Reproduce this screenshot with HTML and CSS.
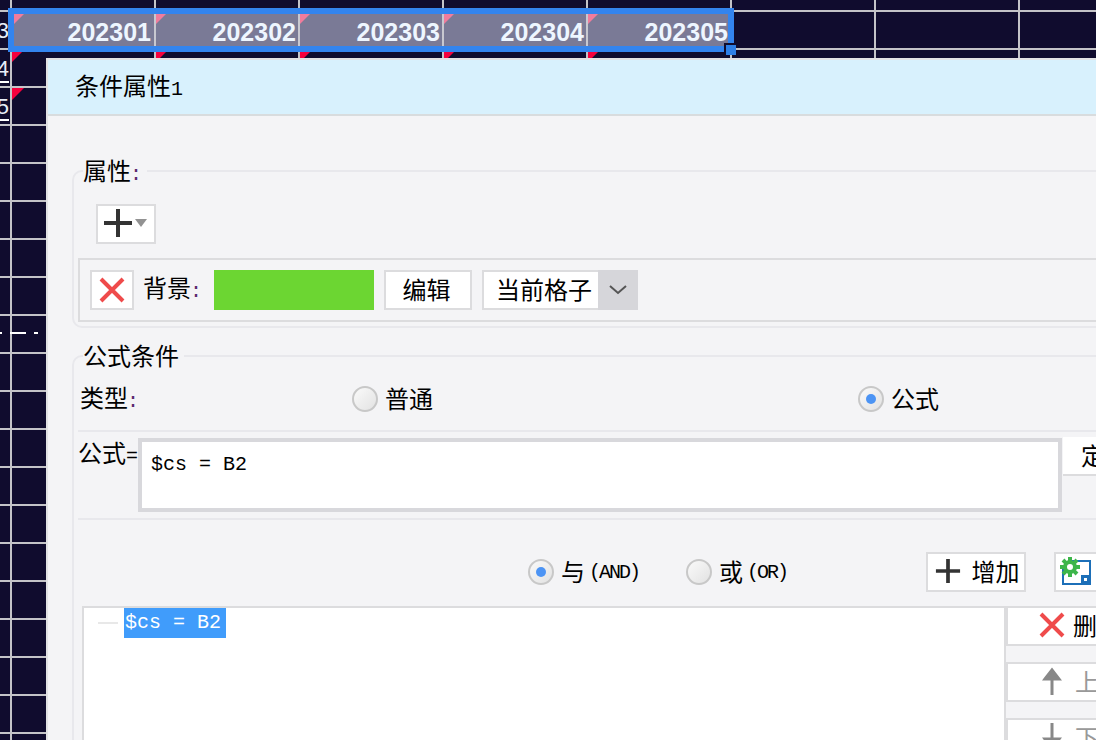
FILE: index.html
```html
<!DOCTYPE html>
<html lang="zh">
<head>
<meta charset="utf-8">
<title>条件属性</title>
<link rel="stylesheet" href="styles.css">
</head>
<body>
<div class="screen">
  <div class="sheet">
    <span class="rownum rownum-3">3</span>
    <span class="rownum rownum-4">4</span>
    <span class="rownum rownum-5">5</span>
    <i class="tri red t1"></i><i class="tri red t2"></i>
    <i class="tri red t3"></i><i class="tri red t4"></i><i class="tri red t5"></i><i class="tri red t6"></i>
    <i class="dash d1"></i><i class="dash d2"></i><i class="dash d3"></i>
    <div class="selection">
      <div class="cell"><i class="tri pink"></i>202301</div>
      <div class="cell"><i class="tri pink"></i>202302</div>
      <div class="cell"><i class="tri pink"></i>202303</div>
      <div class="cell"><i class="tri pink"></i>202304</div>
      <div class="cell"><i class="tri pink"></i>202305</div>
    </div>
    <i class="gap"></i><i class="handle"></i>
  </div>

  <section class="dialog">
    <header class="title">条件属性<span class="mono">1</span></header>
    <div class="body">
      <fieldset class="group">
        <legend>属性<span class="colon">:</span></legend>
        <button class="btn add-menu">
          <svg class="icon-plus" viewBox="0 0 28 28"><path d="M14 0v28M0 14h28" stroke="#333" stroke-width="4"/></svg>
          <svg class="icon-caret" viewBox="0 0 12 8"><path d="M0 0h12L6 8z" fill="#929292"/></svg>
        </button>
        <div class="prop-row">
          <button class="btn del-btn">
            <svg class="icon-x" viewBox="0 0 26 26"><path d="M2 2l22 22M24 2L2 24" stroke="#ef4b4b" stroke-width="4"/></svg>
          </button>
          <span class="prop-label">背景<span class="colon">:</span></span>
          <span class="swatch"></span>
          <button class="btn edit-btn">编辑</button>
          <div class="combo">
            <span class="combo-value">当前格子</span>
            <span class="combo-arrow">
              <svg class="icon-chev" viewBox="0 0 18 10"><path d="M1 1l8 7 8-7" fill="none" stroke="#555" stroke-width="2"/></svg>
            </span>
          </div>
        </div>
      </fieldset>

      <fieldset class="group group-2">
        <legend>公式条件</legend>
        <div class="type-row">
          <span class="type-label">类型<span class="colon">:</span></span>
          <label class="radio-item"><i class="radio"></i>普通</label>
          <label class="radio-item"><i class="radio on"></i>公式</label>
        </div>
        <hr class="rule rule-1">
        <div class="formula-row">
          <span class="formula-label">公式<span class="mono">=</span></span>
          <div class="formula-box mono">$cs = B2</div>
          <button class="btn define-btn">定义</button>
        </div>
        <hr class="rule rule-2">
        <div class="logic-row">
          <label class="radio-item"><i class="radio on"></i>与<span class="mono small">(AND)</span></label>
          <label class="radio-item"><i class="radio"></i>或<span class="mono small">(OR)</span></label>
          <button class="btn add-btn">
            <svg class="icon-plus small-plus" viewBox="0 0 28 28"><path d="M14 1v26M1 14h26" stroke="#333" stroke-width="4"/></svg>
            增加
          </button>
          <button class="btn gear-btn">
            <svg class="icon-gear" viewBox="0 0 32 30">
              <path d="M10 4H30V27H3V12" fill="none" stroke="#1c6fb8" stroke-width="2"/>
              <rect x="21" y="18" width="9" height="9" fill="#1c6fb8"/>
              <rect x="24" y="21" width="3" height="3" fill="#fff"/>
              <circle cx="10" cy="10" r="5" fill="none" stroke="#3cb54a" stroke-width="4"/>
              <path d="M10 0v20M0 10h20M3 3l14 14M17 3L3 17" stroke="#3cb54a" stroke-width="4" stroke-dasharray="4 12"/>
            </svg>
          </button>
        </div>
        <div class="tree-row">
          <div class="tree">
            <span class="tree-branch"></span>
            <span class="tree-node mono">$cs = B2</span>
          </div>
          <div class="side">
            <button class="btn side-btn">
              <svg class="icon-x" viewBox="0 0 26 26"><path d="M2 2l22 22M24 2L2 24" stroke="#ef4b4b" stroke-width="4"/></svg>
              删除
            </button>
            <button class="btn side-btn off">
              <svg class="icon-arrow" viewBox="0 0 20 28"><path d="M10 28V4M3 12l7-9 7 9z" fill="#888" stroke="#888" stroke-width="3"/></svg>
              上移
            </button>
            <button class="btn side-btn off">
              <svg class="icon-arrow" viewBox="0 0 20 28"><path d="M10 0v24M3 16l7 9 7-9z" fill="#888" stroke="#888" stroke-width="3"/></svg>
              下移
            </button>
          </div>
        </div>
      </fieldset>
    </div>
  </section>
</div>
</body>
</html>
```
FILE: styles.css
```css
* { box-sizing: border-box; }
html, body { margin: 0; padding: 0; }
body { font-family: "Noto Sans CJK SC", "Liberation Sans", sans-serif; color: #000; }

.screen {
  position: relative;
  width: 1096px;
  height: 740px;
  overflow: hidden;
}

/* spreadsheet behind the dialog */
.sheet {
  position: absolute;
  inset: 0;
  background-color: #100c2e;
  background-image:
    repeating-linear-gradient(to right, #c4c4c8 0 2px, transparent 2px 144px),
    repeating-linear-gradient(to bottom, #c4c4c8 0 2px, transparent 2px 38px);
  background-position: 10px 0, 0 10px;
}
.rownum {
  position: absolute;
  left: -5px;
  width: 14px;
  height: 24px;
  font: 22px/24px "Liberation Sans", sans-serif;
  text-align: right;
  color: #e8eef8;
}
.rownum-3 { top: 19px; }
.rownum-4 { top: 57px; border-bottom: 2px solid #fff; height: 26px; }
.rownum-5 { top: 95px; border-bottom: 2px solid #fff; height: 26px; }
.tri {
  position: absolute;
  width: 10px;
  height: 10px;
  clip-path: polygon(0 0, 100% 0, 0 100%);
}
.tri.red { background: #f5003c; top: 52px; }
.tri.t1 { left: 12px; }
.tri.t2 { left: 156px; }
.tri.t3 { left: 300px; }
.tri.t4 { left: 444px; }
.tri.t5 { left: 588px; }
.tri.t6 { left: 12px; top: 88px; width: 12px; height: 12px; }
.tri.pink { background: #f07c9c; left: 0; top: 0; }
.dash { position: absolute; top: 332px; height: 2px; background: #fff; }
.d1 { left: 0; width: 2px; }
.d2 { left: 10px; width: 16px; }
.d3 { left: 34px; width: 4px; }

.selection {
  position: absolute;
  left: 8px;
  top: 8px;
  width: 726px;
  height: 44px;
  display: flex;
  border: 6px solid #3384ee;
  background: #7a7a96;
}
.cell {
  position: relative;
  flex: none;
  width: 144px;
  height: 32px;
  padding: 2px 2px 0 0;
  border-right: 2px solid #c8c8d0;
  font: bold 25px/32px "Liberation Sans", sans-serif;
  color: #eef6ff;
  text-align: right;
}
.cell:first-child { width: 142px; padding-right: 3px; }
.cell:last-child { width: 140px; border-right: 0; padding-right: 0; }
.gap { position: absolute; left: 724px; top: 43px; width: 12px; height: 9px; background: #100c2e; }
.handle { position: absolute; left: 726px; top: 45px; width: 10px; height: 10px; background: #2e7fe6; }

/* dialog */
.dialog {
  position: absolute;
  left: 46px;
  top: 58px;
  width: 1200px;
  height: 900px;
  border: 2px solid #e2e2e4;
  background: #f4f4f6;
}
.title {
  height: 56px;
  padding-left: 27px;
  background: #d8f1fd;
  border-bottom: 2px solid #d8dcde;
  font-size: 24px;
  line-height: 50px;
}
.mono { font-family: "Liberation Mono", monospace; }
.title .mono { font-size: 20px; }
.body { padding: 41px 0 0 24px; }

.group {
  margin: 0;
  padding: 0 0 4px 4px;
  width: 1150px;
  min-width: 0;
  border: 2px solid #e8e8ec;
  border-radius: 10px;
}
.group legend {
  margin-left: 5px;
  padding: 0 5px 0 0;
  height: 28px;
  font-size: 24px;
  line-height: 26px;
}
.colon {
  margin-left: -1px;
  font-family: "Liberation Mono", monospace;
  font-size: 20px;
  color: #5b2a6e;
}
.group-2 { margin-top: 14px; }

.btn {
  display: flex;
  align-items: center;
  justify-content: center;
  height: 40px;
  padding: 0 0 2px;
  border: 2px solid #dcdcde;
  background: #fff;
  font: 24px/1 "Noto Sans CJK SC", sans-serif;
  color: #000;
}
.add-menu {
  width: 60px;
  margin: 19px 0 14px 18px;
  padding-right: 2px;
  gap: 3px;
}
.icon-plus { width: 28px; height: 28px; }
.icon-caret { width: 12px; height: 8px; }

.prop-row {
  display: flex;
  align-items: center;
  height: 64px;
  width: 1100px;
  padding-left: 10px;
  border: 2px solid #dcdcde;
}
.del-btn { width: 44px; padding: 0; }
.icon-x { width: 26px; height: 26px; }
.prop-label { margin-left: 9px; width: 71px; font-size: 24px; line-height: 24px; padding-bottom: 2px; }
.swatch { width: 160px; height: 40px; background: #6cd632; }
.edit-btn { width: 88px; margin-left: 10px; padding-right: 3px; }
.combo {
  display: flex;
  width: 156px;
  height: 40px;
  margin-left: 10px;
  border: 2px solid #dcdcde;
  border-right: 0;
  background: #fff;
}
.combo-value { width: 114px; padding-left: 12px; white-space: nowrap; font-size: 24px; line-height: 33px; }
.combo-arrow {
  display: flex;
  flex: 1;
  align-items: center;
  justify-content: center;
  margin: -2px 0;
  background: #d6d6da;
}
.icon-chev { width: 18px; height: 10px; }

.type-row {
  display: grid;
  grid-template-columns: 274px 506px auto;
  align-items: center;
  height: 30px;
  margin-top: 14px;
}
.type-label { padding-left: 2px; font-size: 24px; line-height: 26px; height: 30px; }
.radio-item {
  display: flex;
  align-items: flex-start;
  gap: 7px;
  height: 30px;
  font-size: 24px;
  line-height: 27px;
  white-space: nowrap;
}
.radio {
  display: flex;
  flex: none;
  align-items: center;
  justify-content: center;
  width: 26px;
  height: 26px;
  margin-top: 2px;
  border: 2px solid #c8c8c8;
  border-radius: 50%;
  background: linear-gradient(135deg, #fafafa, #e2e2e2);
}
.radio.on::after {
  content: "";
  width: 10px;
  height: 10px;
  border-radius: 50%;
  background: #4c94f4;
}
.rule { height: 2px; margin: 16px 0 0; border: 0; background: #e8e8ec; }
.rule-2 { margin-top: 6px; }

.formula-row { display: flex; align-items: flex-start; height: 74px; margin-top: 6px; }
.formula-label { width: 60px; font-size: 24px; line-height: 28px; white-space: nowrap; }
.formula-label .mono { font-size: 20px; }
.formula-box {
  width: 924px;
  height: 74px;
  padding: 11px 0 0 9px;
  border: 4px solid #d8d8dc;
  background: #fff;
  font-size: 20px;
  line-height: 24px;
}
.define-btn {
  width: 80px;
  height: 39px;
  margin: -1px 0 0 1px;
  padding-left: 18px;
  border-width: 0 0 2px;
  justify-content: flex-start;
}

.logic-row {
  display: grid;
  grid-template-columns: 608px 240px 128px auto;
  align-items: center;
  height: 40px;
  margin-top: 32px;
}
.logic-row .radio-item:first-child { margin-left: 450px; }
.small { margin-left: -3px; font-size: 20px; line-height: 31px; letter-spacing: -2px; }
.add-btn { width: 100px; padding-left: 2px; gap: 11px; }
.small-plus { width: 26px; height: 26px; }
.gear-btn { width: 80px; justify-content: flex-start; padding: 0 0 0 4px; }
.icon-gear { width: 32px; height: 30px; }

.tree-row { display: flex; margin-top: 14px; margin-left: 4px; }
.tree {
  display: flex;
  align-items: flex-start;
  width: 924px;
  height: 300px;
  padding-left: 14px;
  border: 2px solid #dcdcde;
  border-width: 2px 2px 0;
  background: #fff;
}
.tree-branch { width: 20px; height: 2px; margin: 14px 6px 0 0; background: #e8e8e8; }
.tree-node {
  height: 30px;
  padding-left: 1px;
  width: 102px;
  background: #409cfb;
  color: #fff;
  font-size: 20px;
  line-height: 30px;
}
.side { display: flex; flex-direction: column; gap: 16px; }
.side-btn { width: 140px; justify-content: flex-start; padding-left: 31px; gap: 8px; }
.side-btn.off { color: #999; padding-left: 34px; gap: 13px; }
.icon-arrow { width: 20px; height: 28px; }
```
